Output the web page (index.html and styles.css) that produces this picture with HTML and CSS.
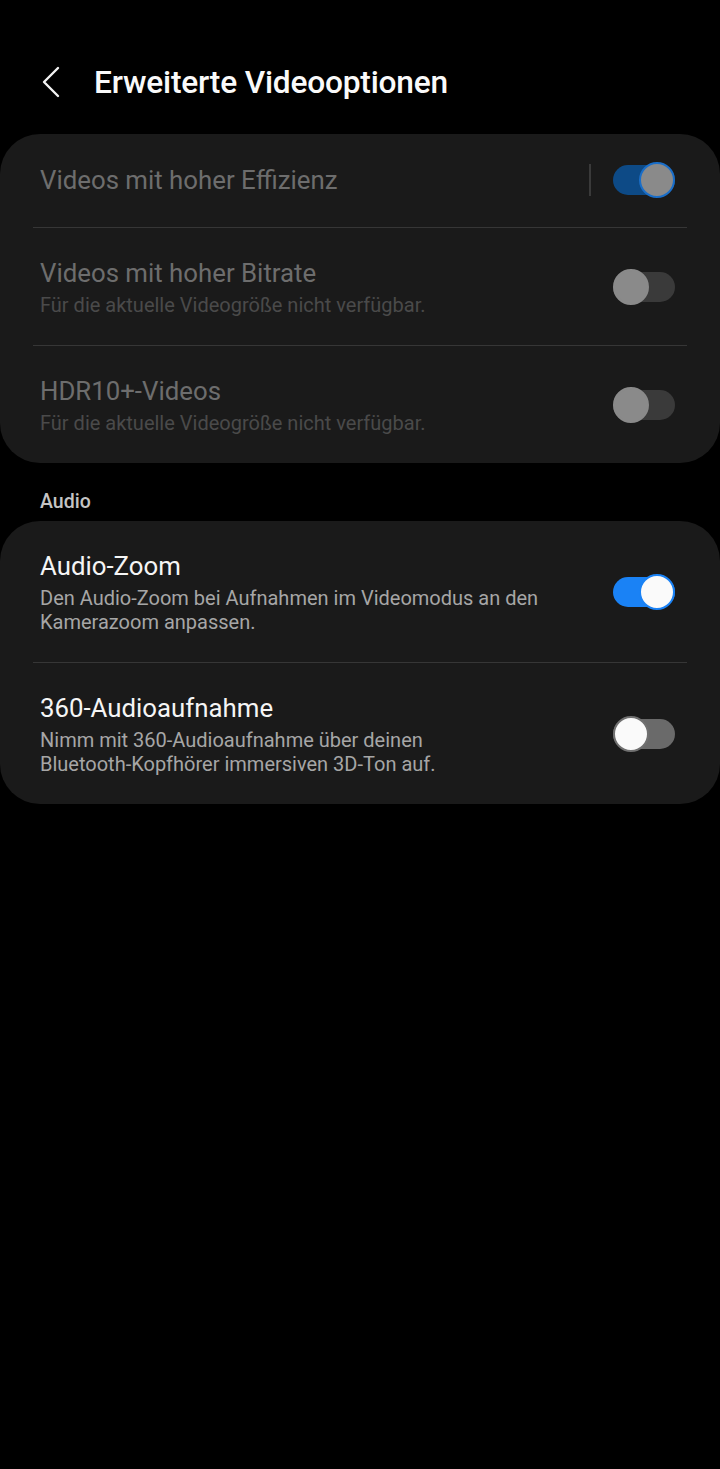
FILE: index.html
```html
<!DOCTYPE html>
<html lang="de">
<head>
  <meta charset="UTF-8" />
  <meta name="viewport" content="width=device-width, initial-scale=1.0"/>
  <title>Erweiterte Videooptionen</title>
  <link rel="stylesheet" href="styles.css">
</head>
<body>

<div class="header">
  <svg class="back" width="20" height="32" viewBox="0 0 20 32">
    <path d="M17 2 L3 16 L17 30" fill="none" stroke="#f2f2f2" stroke-width="2.4" stroke-linecap="round" stroke-linejoin="round"/>
  </svg>
  <h1>Erweiterte Videooptionen</h1>
</div>

<div class="card">
  <div class="row single disabled">
    <div class="text">
      <div class="title">Videos mit hoher Effizienz</div>
    </div>
    <div class="vline"></div>
    <div class="switch on dim"><span class="knob"></span></div>
  </div>
  <div class="divider"></div>
  <div class="row disabled">
    <div class="text">
      <div class="title">Videos mit hoher Bitrate</div>
      <div class="sub">Für die aktuelle Videogröße nicht verfügbar.</div>
    </div>
    <div class="switch dim"><span class="knob"></span></div>
  </div>
  <div class="divider"></div>
  <div class="row disabled">
    <div class="text">
      <div class="title">HDR10+-Videos</div>
      <div class="sub">Für die aktuelle Videogröße nicht verfügbar.</div>
    </div>
    <div class="switch dim"><span class="knob"></span></div>
  </div>
</div>

<div class="section">Audio</div>

<div class="card">
  <div class="row">
    <div class="text">
      <div class="title">Audio-Zoom</div>
      <div class="sub">Den Audio-Zoom bei Aufnahmen im Videomodus an den Kamerazoom anpassen.</div>
    </div>
    <div class="switch on"><span class="knob"></span></div>
  </div>
  <div class="divider"></div>
  <div class="row">
    <div class="text">
      <div class="title">360-Audioaufnahme</div>
      <div class="sub">Nimm mit 360-Audioaufnahme über deinen<br>Bluetooth-Kopfhörer immersiven 3D-Ton auf.</div>
    </div>
    <div class="switch"><span class="knob"></span></div>
  </div>
</div>

</body>
</html>
```

FILE: styles.css
```css
body {
  margin: 0;
  background: #000;
  font-family: Roboto, "Noto Sans", sans-serif;
  color: #f5f5f5;
}
.header {
  display: flex;
  align-items: center;
  height: 52px;
  padding: 56px 0 26px 41px;
}
.back {
  display: block;
}
.header h1 {
  margin: 0 0 0 33px;
  font-size: 31.7px;
  font-weight: 500;
  letter-spacing: -0.2px;
  color: #fafafa;
}
.card {
  background: #1a1a1a;
  border-radius: 40px;
}
.row {
  display: flex;
  align-items: center;
  padding: 29px 45px 28px 40px;
}
.row.single {
  padding-top: 30px;
  padding-bottom: 31px;
}
.text {
  flex: 1;
  padding-right: 40px;
}
.title {
  font-size: 25.8px;
  line-height: 32px;
  color: #f5f5f5;
}
.sub {
  margin-top: 4px;
  font-size: 20px;
  line-height: 24px;
  color: #a6a6a6;
}
.disabled .title {
  color: #6d6d6d;
}
.disabled .sub {
  color: #4a4a4a;
}
.divider {
  height: 1px;
  margin: 0 33px;
  background: #363636;
}
.vline {
  width: 2px;
  height: 32px;
  background: #3a3a3a;
  margin-right: 22px;
}
.switch {
  position: relative;
  width: 62px;
  height: 30px;
  border-radius: 15px;
  background: #6a6a6a;
}
.switch .knob {
  position: absolute;
  left: 0;
  top: -3px;
  width: 32px;
  height: 32px;
  border-radius: 50%;
  background: #fafafa;
  border: 2px solid #707070;
}
.switch.on {
  background: #1a82f5;
}
.switch.on .knob {
  left: auto;
  right: 0;
  border-color: #1a82f5;
}
.switch.dim {
  background: #3a3a3a;
}
.switch.dim .knob {
  background: #8a8a8a;
  border-color: #8a8a8a;
}
.switch.on.dim {
  background: #0d4a86;
}
.switch.on.dim .knob {
  border-color: #1a6ec8;
}
.section {
  padding: 28px 40px 8px;
  font-size: 19.5px;
  line-height: 22px;
  font-weight: 500;
  color: #c4c4c4;
}
```
